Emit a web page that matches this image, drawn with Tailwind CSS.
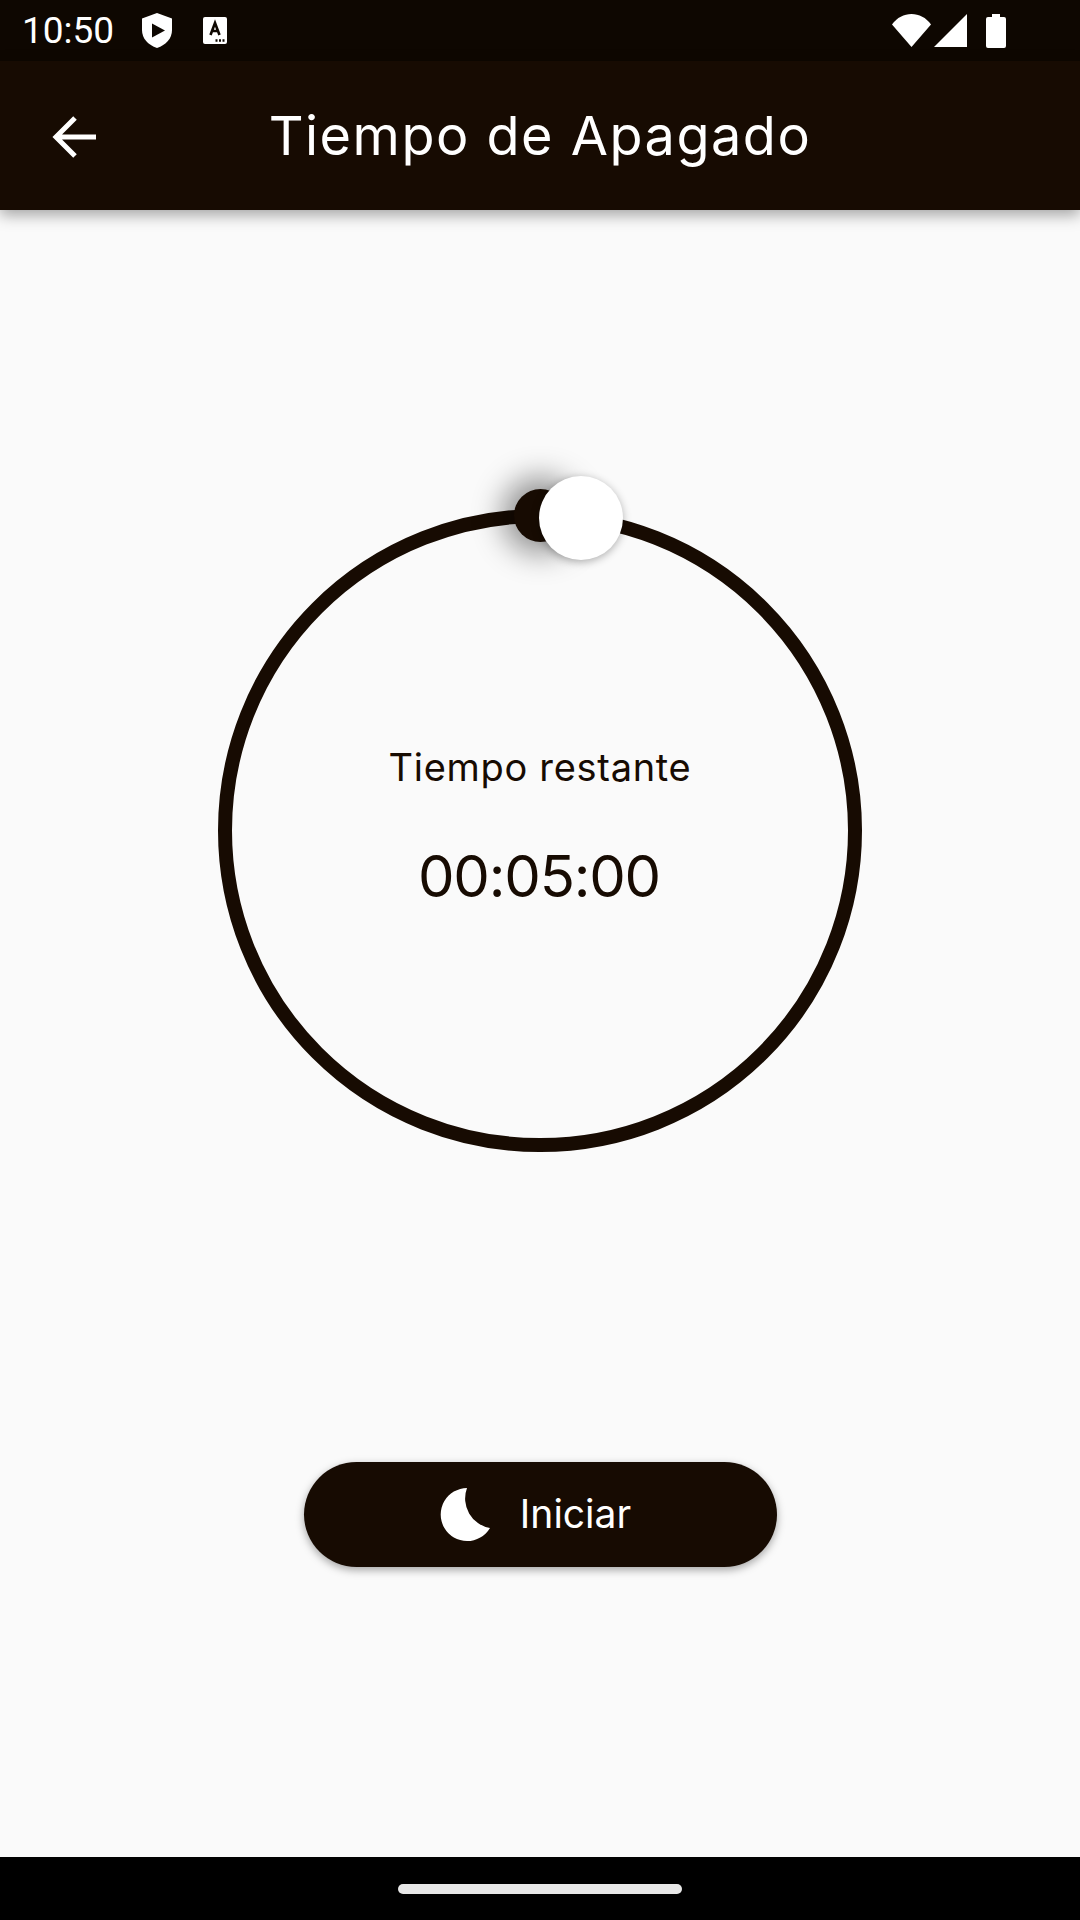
<!DOCTYPE html>
<html lang="es">
  <head>
    <meta charset="UTF-8" />
    <meta name="viewport" content="width=device-width, initial-scale=1.0" />
    <title>Tiempo de Apagado</title>
    <script src="https://cdn.jsdelivr.net/npm/@tailwindcss/browser@4"></script>
  </head>
  <body class="bg-[#fafafa]">
    <div class="w-[1080px] h-[1920px] flex flex-col overflow-hidden font-['Inter',sans-serif] text-[#170b02]">
      <!-- Status bar -->
      <div class="h-[61px] bg-[#0e0701] flex items-center text-white">
        <span class="ml-[22px] w-[92px] font-['Roboto',sans-serif] text-[37px] leading-none">10:50</span>
        <svg class="ml-[28px] w-[30px] h-[35px]" viewBox="0 0 30 35">
          <path fill="#fff" d="M15 0 30 5.500V17c0 8.500-6 15-15 18C6 32 0 25.500 0 17V5.500Z" />
          <path fill="#0e0701" d="M10 10.500 23 17.500 10 24.500Z" />
        </svg>
        <svg class="ml-[31px] w-[24px] h-[27px]" viewBox="0 0 24 27">
          <rect width="24" height="27" rx="2" fill="#fff" />
          <path fill="none" stroke="#0e0701" stroke-width="2.600" d="M7.500 18 12 6l4.500 12M9 14h6" />
          <path stroke="#0e0701" stroke-width="2.400" stroke-dasharray="2 1.500" d="M12.500 23.500h9" />
        </svg>
        <div class="ml-auto mr-[74px] flex items-center">
          <svg class="w-[39px] h-[33px]" viewBox="0 0 39 33">
            <path fill="#fff" d="M0 10.500C5 3.500 12 0 19.500 0S34 3.500 39 10.500L19.500 33Z" />
          </svg>
          <svg class="ml-[3px] w-[33px] h-[33px]" viewBox="0 0 33 33">
            <path fill="#fff" d="M33 0V33H0Z" />
          </svg>
          <svg class="ml-[19px] w-[20px] h-[34px]" viewBox="0 0 20 34">
            <path fill="#fff" d="M6 0H14V3H18Q20 3 20 5V32Q20 34 18 34H2Q0 34 0 32V5Q0 3 2 3H6Z" />
          </svg>
        </div>
      </div>

      <!-- App bar -->
      <div class="relative h-[149px] bg-[#170b02] flex items-center shadow-[0_5px_14px_rgba(0,0,0,0.35)]">
        <svg class="absolute left-[52px] top-[55px] w-[44px] h-[42px]" viewBox="0 0 44 42">
          <path fill="none" stroke="#fff" stroke-width="5" d="M44 21H4M23 2 4 21 23 40" />
        </svg>
        <h1 class="w-full text-center text-white text-[54px] leading-none tracking-[1.500px] pt-[1px]">Tiempo de Apagado</h1>
      </div>

      <!-- Timer -->
      <div class="flex-1 flex flex-col items-center pt-[299px]">
        <div class="relative w-[644px] h-[643px] rounded-full border-[14px] border-[#170b02] flex flex-col items-center">
          <div class="absolute left-[282px] -top-[34px] w-[53px] h-[53px] rounded-full bg-[#170b02] shadow-[0_0_30px_12px_rgba(0,0,0,0.42)]"></div>
          <div class="absolute left-[307px] -top-[47px] w-[84px] h-[84px] rounded-full bg-white shadow-[0_2px_8px_rgba(0,0,0,0.3)]"></div>
          <span class="mt-[225px] text-[38px] leading-none tracking-[0.700px]">Tiempo restante</span>
          <span class="mt-[61px] mr-[2px] text-[58px] leading-none tracking-[-1.200px]">00:05:00</span>
        </div>
        <button class="mt-[310px] w-[473px] h-[105px] rounded-full bg-[#170b02] text-white flex items-center justify-center pr-[9px] shadow-[0_3px_8px_rgba(0,0,0,0.35)]">
          <svg class="w-[50px] h-[53px]" viewBox="0 0 50 53">
            <path fill="#fff" d="M27 0A26.500 26.500 0 1 0 50 40 30 30 0 0 1 27 0Z" />
          </svg>
          <span class="ml-[30px] mb-[3px] text-[39px] leading-none">Iniciar</span>
        </button>
      </div>

      <!-- Nav bar -->
      <div class="h-[63px] bg-black flex items-center justify-center">
        <div class="w-[284px] h-[10px] rounded-full bg-[#e8e8e8]"></div>
      </div>
    </div>
  </body>
</html>
